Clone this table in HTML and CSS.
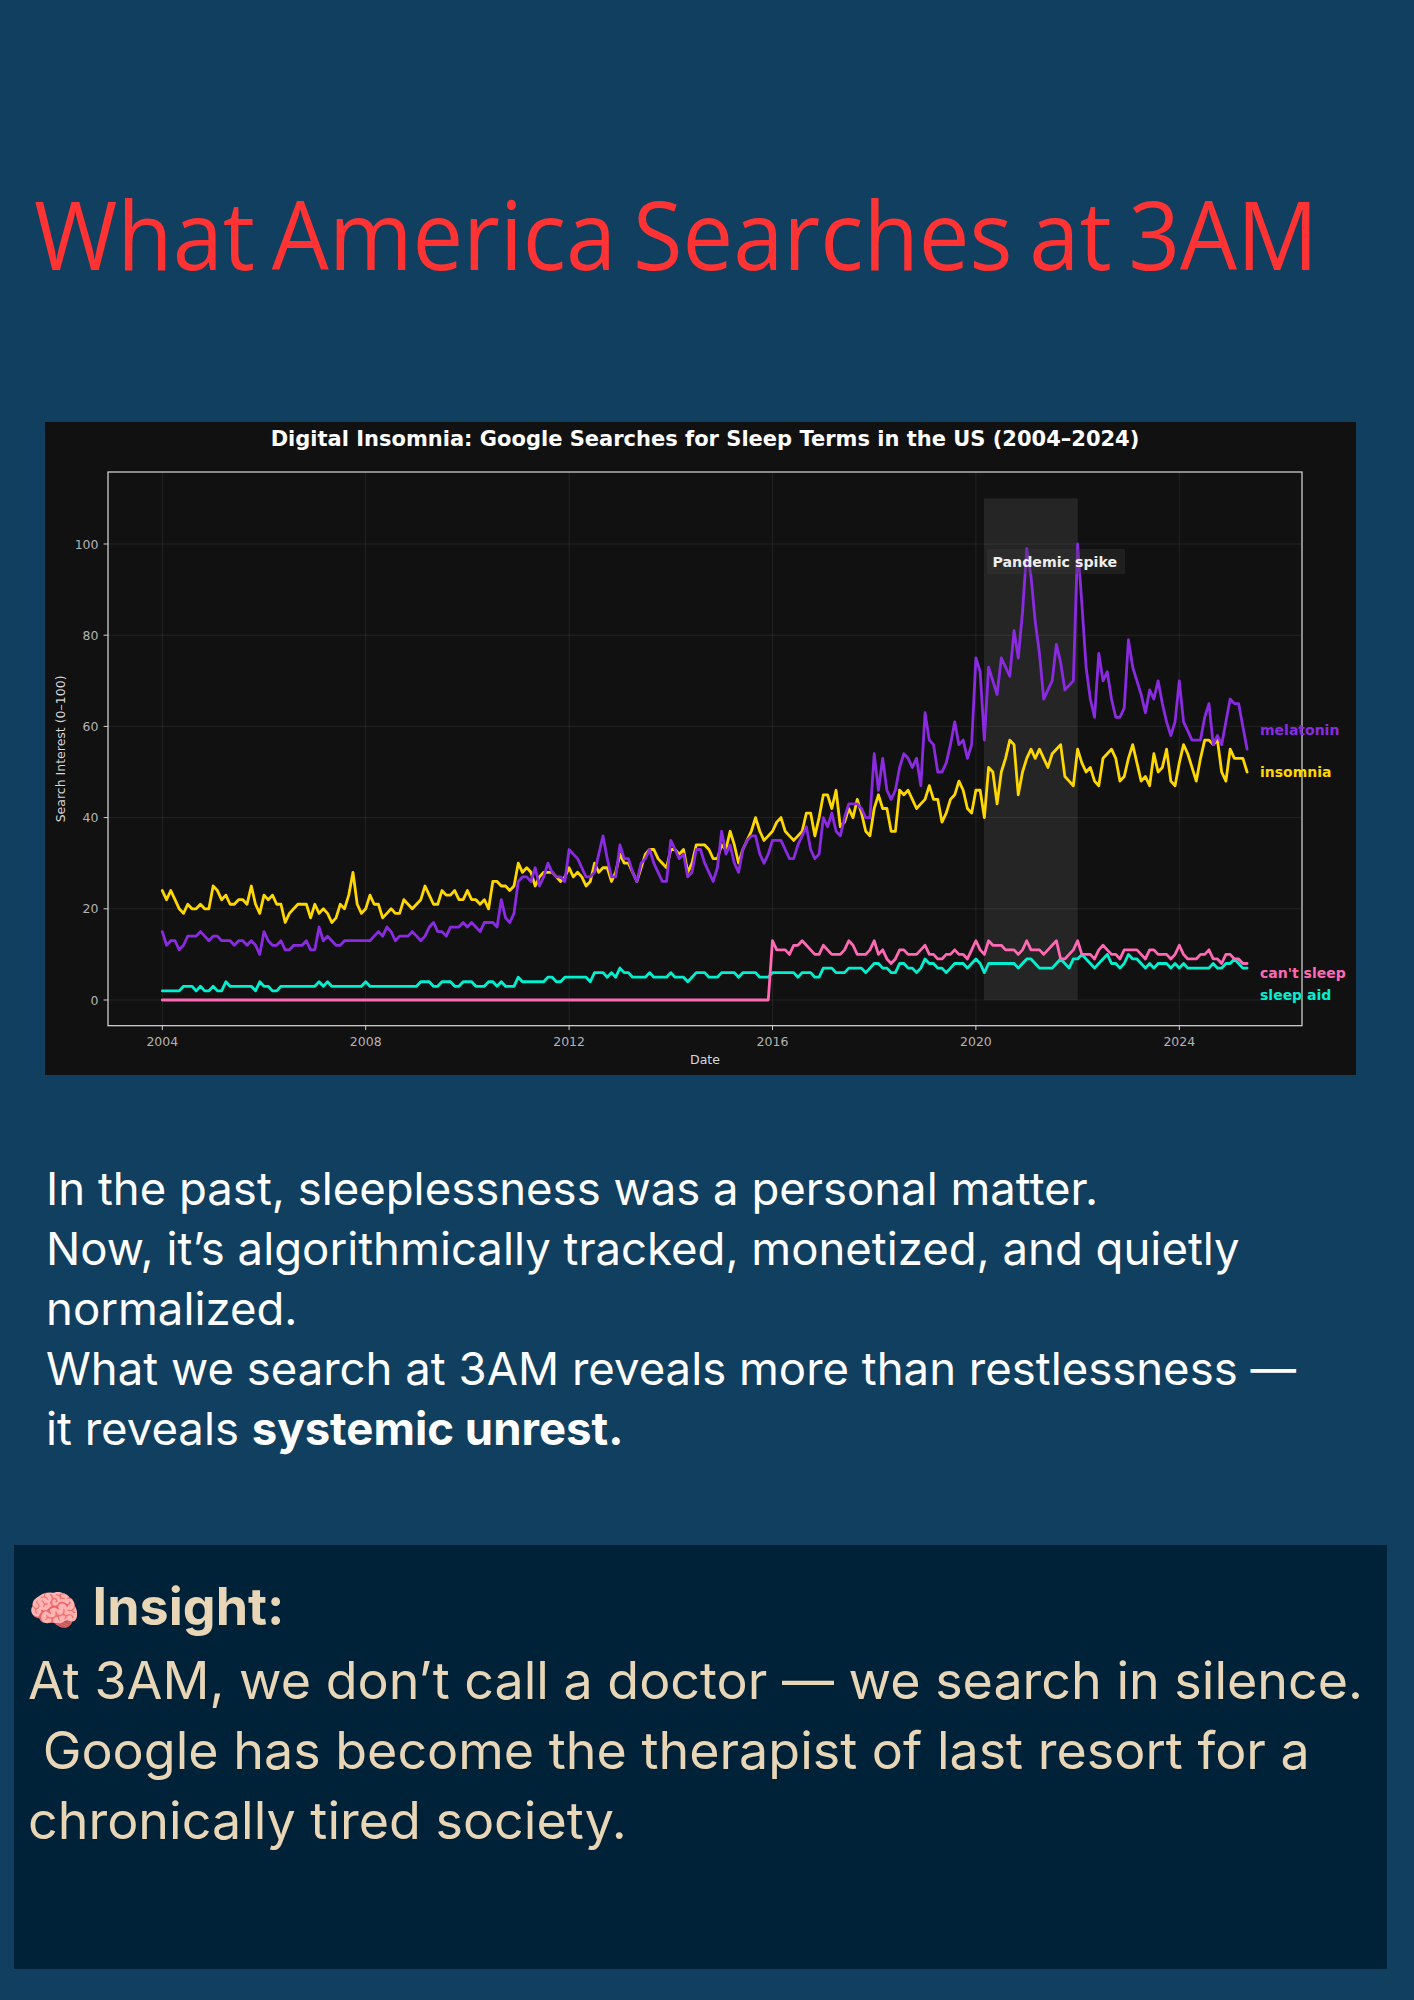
FILE: index.html
```html
<!DOCTYPE html>
<html lang="en">
<head>
<meta charset="utf-8">
<title>What America Searches at 3AM</title>
<link rel="stylesheet" href="styles.css">
</head>
<body>
<main class="page">
  <h1 class="title"><span class="title-text">What America Searches at 3AM</span></h1>

  <figure class="chart">
    <svg class="chart-svg" width="1311" height="653" viewBox="0 0 1311 653" xmlns="http://www.w3.org/2000/svg">
      <rect class="chart-bg" x="0" y="0" width="1311" height="653"/>
      <text class="chart-title" x="660" y="23.5" text-anchor="middle">Digital Insomnia: Google Searches for Sleep Terms in the US (2004–2024)</text>

      <g class="grid">
        <line x1="63" y1="578" x2="1257" y2="578"/>
        <line x1="63" y1="486.8" x2="1257" y2="486.8"/>
        <line x1="63" y1="395.6" x2="1257" y2="395.6"/>
        <line x1="63" y1="304.4" x2="1257" y2="304.4"/>
        <line x1="63" y1="213.2" x2="1257" y2="213.2"/>
        <line x1="63" y1="122" x2="1257" y2="122"/>
        <line x1="117.3" y1="50" x2="117.3" y2="603.7"/>
        <line x1="320.7" y1="50" x2="320.7" y2="603.7"/>
        <line x1="524.1" y1="50" x2="524.1" y2="603.7"/>
        <line x1="727.5" y1="50" x2="727.5" y2="603.7"/>
        <line x1="930.9" y1="50" x2="930.9" y2="603.7"/>
        <line x1="1134.3" y1="50" x2="1134.3" y2="603.7"/>
      </g>

      <rect class="span" x="939" y="76.4" width="93.7" height="501.6"/>

      <g class="series">
        <polyline id="line-insomnia" class="line line-insomnia" points=""/>
        <polyline id="line-melatonin" class="line line-melatonin" points=""/>
        <polyline id="line-sleepaid" class="line line-sleepaid" points=""/>
        <polyline id="line-cantsleep" class="line line-cantsleep" points=""/>
      </g>

      <rect class="spines" x="63" y="50" width="1194" height="553.7"/>

      <g class="ticks">
        <line x1="58.6" y1="578" x2="63" y2="578"/>
        <line x1="58.6" y1="486.8" x2="63" y2="486.8"/>
        <line x1="58.6" y1="395.6" x2="63" y2="395.6"/>
        <line x1="58.6" y1="304.4" x2="63" y2="304.4"/>
        <line x1="58.6" y1="213.2" x2="63" y2="213.2"/>
        <line x1="58.6" y1="122" x2="63" y2="122"/>
        <line x1="117.3" y1="603.7" x2="117.3" y2="608.1"/>
        <line x1="320.7" y1="603.7" x2="320.7" y2="608.1"/>
        <line x1="524.1" y1="603.7" x2="524.1" y2="608.1"/>
        <line x1="727.5" y1="603.7" x2="727.5" y2="608.1"/>
        <line x1="930.9" y1="603.7" x2="930.9" y2="608.1"/>
        <line x1="1134.3" y1="603.7" x2="1134.3" y2="608.1"/>
      </g>

      <g class="tick-labels ytl">
        <text x="53.5" y="582.5">0</text>
        <text x="53.5" y="491.3">20</text>
        <text x="53.5" y="400.1">40</text>
        <text x="53.5" y="308.9">60</text>
        <text x="53.5" y="217.7">80</text>
        <text x="53.5" y="126.5">100</text>
      </g>
      <g class="tick-labels xtl">
        <text x="117.3" y="623.5">2004</text>
        <text x="320.7" y="623.5">2008</text>
        <text x="524.1" y="623.5">2012</text>
        <text x="727.5" y="623.5">2016</text>
        <text x="930.9" y="623.5">2020</text>
        <text x="1134.3" y="623.5">2024</text>
      </g>

      <text class="axis-label" x="660" y="642" text-anchor="middle">Date</text>
      <text class="axis-label" x="20" y="326.9" text-anchor="middle" transform="rotate(-90 20 326.9)">Search Interest (0–100)</text>

      <rect class="note-box" x="942" y="127" width="138" height="25"/>
      <text class="note-text" x="947.5" y="145.3">Pandemic spike</text>

      <text class="end-label lbl-melatonin" x="1215" y="313">melatonin</text>
      <text class="end-label lbl-insomnia" x="1215" y="354.5">insomnia</text>
      <text class="end-label lbl-cantsleep" x="1215" y="556">can't sleep</text>
      <text class="end-label lbl-sleepaid" x="1215" y="578">sleep aid</text>
    </svg>
  </figure>

  <p class="lede">In the past, sleeplessness was a personal matter.<br>Now, it’s algorithmically tracked, monetized, and quietly normalized.<br>What we search at 3AM reveals more than restlessness — it reveals <strong>systemic unrest.</strong></p>

  <section class="insight">
    <p class="insight-text"><strong class="insight-head"><span class="emoji">🧠</span> Insight:</strong><br>At 3AM, we don’t call a doctor — we search in silence.<br>&nbsp;Google has become the therapist of last resort for a chronically tired society.</p>
  </section>
</main>
<script src="chart.js"></script>
</body>
</html>
```

FILE: styles.css
```css
* {
  box-sizing: border-box;
}

html,
body {
  margin: 0;
  padding: 0;
}

body {
  background: #103f5f;
  width: 1414px;
  min-height: 2000px;
  font-family: Inter, "Noto Sans", sans-serif;
  color: #ffffff;
}

.page {
  padding-top: 175px;
  overflow: hidden;
}

.title {
  margin: 0 0 0 34px;
  font-family: "Open Sans", "Noto Sans", sans-serif;
  font-weight: 400;
  font-size: 96px;
  line-height: 115px;
  color: #ff3333;
  white-space: nowrap;
}

.title-text {
  display: inline-block;
  word-spacing: -7px;
  transform: scaleX(0.94);
  transform-origin: left center;
}

.chart {
  margin: 132px 0 0 45px;
  width: 1311px;
  height: 653px;
}

.chart-svg {
  display: block;
  font-family: "DejaVu Sans", sans-serif;
}

.chart-bg {
  fill: #111111;
}

.chart-title {
  font-size: 21px;
  font-weight: 700;
  fill: #ffffff;
}

.grid line {
  stroke: #ffffff;
  stroke-opacity: 0.075;
  stroke-width: 1;
}

.span {
  fill: #ffffff;
  fill-opacity: 0.085;
}

.line {
  fill: none;
  stroke-width: 2.8;
  stroke-linejoin: round;
  stroke-linecap: round;
}

.line-insomnia { stroke: #ffd700; }
.line-melatonin { stroke: #8a2be2; }
.line-sleepaid { stroke: #00f0d0; }
.line-cantsleep { stroke: #ff69b4; }

.spines {
  fill: none;
  stroke: #dddddd;
  stroke-width: 1.2;
}

.ticks line {
  stroke: #cccccc;
  stroke-width: 1;
}

.tick-labels text {
  font-size: 12.5px;
  fill: #b3b3b3;
}

.ytl text {
  text-anchor: end;
}

.xtl text {
  text-anchor: middle;
}

.axis-label {
  font-size: 12.5px;
  fill: #d8d8d8;
}

.note-box {
  fill: #3a3a3a;
  fill-opacity: 0.35;
}

.note-text {
  font-size: 14.2px;
  font-weight: 700;
  fill: #eeeeee;
}

.end-label {
  font-size: 14px;
  font-weight: 700;
}

.lbl-melatonin { fill: #8a2be2; }
.lbl-insomnia { fill: #ffd700; }
.lbl-cantsleep { fill: #ff69b4; }
.lbl-sleepaid { fill: #00f0d0; }

.lede {
  margin: 84px 0 0 46px;
  width: 1270px;
  font-size: 45.5px;
  line-height: 60px;
  font-weight: 400;
  color: #ffffff;
}

.lede strong {
  font-weight: 700;
}

.insight {
  margin: 86px 0 0 14px;
  width: 1373px;
  height: 424px;
  padding: 27px 14px 0 14px;
  background: #002239;
}

.insight-text {
  margin: 0;
  font-size: 52px;
  line-height: 70px;
  color: #e9d6b6;
}

.insight-head {
  font-weight: 700;
}

.emoji {
  font-family: "Noto Color Emoji", "Apple Color Emoji", "Segoe UI Emoji", sans-serif;
  font-weight: 400;
  font-size: 42px;
}
```

FILE: chart.js
```js
(function () {
  var X0 = 117.3, DX = 4.2375, Y0 = 578, DY = 4.56;

  var insomnia = [
    24,22,24,22,20,19,21,20,20,21,20,20,
    25,24,22,23,21,21,22,22,21,25,21,19,
    23,22,23,21,21,17,19,20,21,21,21,18,
    21,19,20,19,17,18,21,20,23,28,21,19,
    20,23,21,21,18,19,20,19,19,22,21,20,
    21,22,25,23,21,21,24,23,23,24,22,22,
    24,22,22,21,22,20,26,26,25,25,24,25,
    30,28,29,28,25,27,28,28,28,27,26,27,
    29,27,28,27,25,26,30,28,29,29,26,28,
    32,30,30,28,26,29,32,33,33,31,30,29,
    33,33,32,33,28,30,34,34,34,33,31,31,
    34,33,37,34,30,33,35,37,40,37,35,36,
    37,39,40,37,36,35,36,37,41,41,36,40,
    45,45,42,46,38,39,42,40,44,41,37,36,
    42,45,42,42,37,37,46,45,46,44,42,43,
    44,47,44,44,39,41,44,45,48,46,42,41,
    46,46,40,51,50,43,50,53,57,56,45,50,
    53,55,53,55,53,51,54,55,56,49,48,47,
    55,52,50,51,48,47,53,54,55,53,48,49,
    53,56,52,48,49,47,54,50,51,55,48,47,
    52,56,54,51,48,53,57,57,56,57,50,48,
    55,53,53,53,50
  ];

  var melatonin = [
    15,12,13,13,11,12,14,14,14,15,14,13,
    14,14,13,13,13,12,13,13,12,13,12,10,
    15,13,12,12,13,11,11,12,12,12,13,11,
    11,16,13,14,13,12,12,13,13,13,13,13,
    13,13,14,15,14,16,15,13,14,14,14,15,
    14,13,14,16,17,15,15,14,16,16,16,17,
    16,17,16,15,17,17,17,16,22,18,17,19,
    26,27,27,26,29,25,27,30,28,27,27,26,
    33,32,31,29,27,27,28,32,36,31,27,27,
    34,31,31,28,26,30,31,33,30,28,26,26,
    35,33,31,32,27,28,33,33,30,28,26,29,
    37,32,34,30,28,33,35,36,36,32,30,32,
    35,35,35,33,31,31,34,36,38,33,31,32,
    40,38,41,37,36,40,43,43,43,42,40,40,
    54,46,53,46,44,46,51,54,53,51,53,47,
    63,57,56,50,50,52,56,61,56,57,53,56,
    75,72,57,73,70,67,75,73,71,81,75,85,
    99,93,83,76,66,68,70,78,74,68,69,70,
    100,87,73,66,62,76,70,72,66,62,62,64,
    79,73,70,67,63,68,66,70,65,61,58,61,
    70,61,59,57,57,57,62,65,56,58,56,61,
    66,65,65,60,55
  ];

  var sleepaid = [
    2,2,2,2,2,3,3,3,2,3,2,2,
    3,2,2,4,3,3,3,3,3,3,2,4,
    3,3,2,2,3,3,3,3,3,3,3,3,
    3,4,3,4,3,3,3,3,3,3,3,3,
    4,3,3,3,3,3,3,3,3,3,3,3,
    3,4,4,4,3,3,4,4,4,3,3,4,
    4,4,3,3,3,4,4,3,4,3,3,3,
    5,4,4,4,4,4,4,5,5,4,4,5,
    5,5,5,5,5,4,6,6,6,5,6,5,
    7,6,6,5,5,5,5,6,5,5,5,5,
    6,5,5,5,4,5,6,6,6,5,5,5,
    6,6,6,6,5,6,6,6,6,5,5,5,
    6,6,6,6,6,6,5,6,6,6,5,5,
    7,7,7,6,6,6,7,7,7,7,6,7,
    8,8,7,7,6,6,8,8,7,7,6,7,
    9,8,8,7,7,6,7,8,8,8,7,8,
    9,8,6,8,8,8,8,8,8,8,7,8,
    9,9,8,7,7,7,7,8,9,8,7,9,
    9,10,9,8,7,8,9,10,8,8,7,8,
    10,9,9,8,7,8,7,8,8,8,7,8,
    7,8,7,7,7,7,7,7,8,7,7,8,
    8,9,8,7,7
  ];

  var cantsleep = [];
  for (var z = 0; z < 144; z++) { cantsleep.push(0); }
  cantsleep = cantsleep.concat([
    13,11,11,11,10,12,12,13,12,11,10,10,
    12,11,10,10,10,11,13,12,10,10,10,11,
    13,10,11,9,8,9,11,11,10,10,10,11,
    12,10,10,9,9,10,10,11,10,10,9,11,
    13,11,10,13,12,12,12,11,11,11,10,11,
    13,11,11,11,10,11,12,13,9,9,10,11,
    13,10,10,10,9,11,12,11,10,10,9,11,
    11,11,11,10,9,11,11,10,10,10,9,10,
    12,10,9,9,9,10,10,11,9,9,8,10,
    10,9,9,8,8
  ]);

  function toPoints(arr) {
    var out = [];
    for (var i = 0; i < arr.length; i++) {
      out.push((X0 + DX * i).toFixed(2) + ',' + (Y0 - DY * arr[i]).toFixed(2));
    }
    return out.join(' ');
  }

  var series = {
    insomnia: insomnia,
    melatonin: melatonin,
    sleepaid: sleepaid,
    cantsleep: cantsleep
  };

  Object.keys(series).forEach(function (key) {
    var el = document.getElementById('line-' + key);
    if (el) { el.setAttribute('points', toPoints(series[key])); }
  });
})();
```
